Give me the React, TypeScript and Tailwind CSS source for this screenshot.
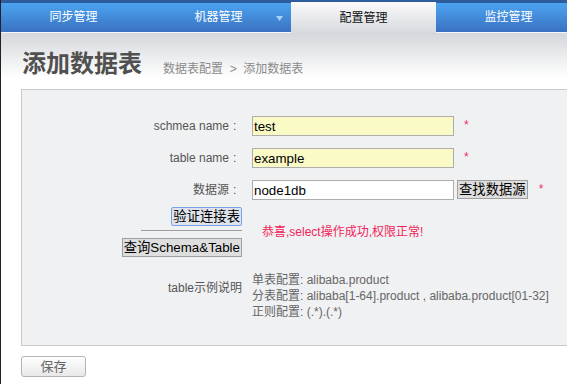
import React from "react";

const font = { fontFamily: '"Liberation Sans", Arial, "Noto Sans CJK SC", sans-serif' };

function Tab({ label, active, arrow }: { label: string; active?: boolean; arrow?: boolean }) {
  if (active) {
    return (
      <div className="relative w-[145px] shrink-0 h-[31px] -mt-[1px] flex items-center justify-center bg-[linear-gradient(#fafafb,#d7d9de)] text-[12px] text-[#111]">
        {label}
      </div>
    );
  }
  return (
    <div className="relative w-[145px] shrink-0 h-[30px] flex items-center justify-center bg-[linear-gradient(#4ba4f1,#3a71c1)] border-b border-[#f4f6f8] text-[12px] text-white">
      <span className="pb-[1px]">{label}</span>
      {arrow && (
        <svg className="absolute left-[130px] top-[13px]" width="7" height="5" viewBox="0 0 7 5">
          <path d="M0 0 L7 0 L3.5 5 Z" fill="#a9d0f5" />
        </svg>
      )}
    </div>
  );
}

function Row({ label, children }: { label: string; children: React.ReactNode }) {
  return (
    <div className="flex items-center h-[32px]">
      <div className="w-[220px] shrink-0 text-right text-[12px] text-[#555]">
        {label}
        <span className="inline-block w-[13px] pl-[4px] text-left">:</span>
      </div>
      <div className="ml-[10px] flex items-center">{children}</div>
    </div>
  );
}

function Star({ ml }: { ml: string }) {
  return <span className={`text-[12px] text-[#f0306a] -mt-[3px] ${ml}`}>*</span>;
}

export default function App() {
  return (
    <div style={font} className="w-[567px] h-[384px] overflow-hidden bg-white border-l border-[#222]">
      {/* nav */}
      <div className="h-[3px] bg-[#2d5c9d]" />
      <div className="flex h-[30px]">
        <Tab label="同步管理" />
        <Tab label="机器管理" arrow />
        <Tab label="配置管理" active />
        <Tab label="监控管理" />
      </div>

      {/* title area */}
      <div className="h-[56px] bg-[linear-gradient(#d4d7db,#ffffff_80%)] pl-[21px] pt-[17px] flex items-start">
        <div className="text-[24px] leading-[28px] font-bold text-[#505050]">添加数据表</div>
        <div className="ml-[21px] mt-[11px] text-[12px] leading-[16px] text-[#8a8a8a]">
          数据表配置&nbsp;&nbsp;&gt;&nbsp;&nbsp;添加数据表
        </div>
      </div>

      {/* panel */}
      <div className="ml-[20px] w-[560px] h-[257px] border border-[#c9c9c9] bg-[#f0f1f3] pt-[20px]">
        <Row label="schmea name">
          <input
            defaultValue="test"
            className="w-[202px] h-[20px] border border-[#adadad] bg-[#fafac6] px-[1px] text-[13.333px] text-black outline-none"
          />
          <Star ml="ml-[10px]" />
        </Row>
        <Row label="table name">
          <input
            defaultValue="example"
            className="w-[202px] h-[20px] border border-[#adadad] bg-[#fafac6] px-[1px] text-[13.333px] text-black outline-none"
          />
          <Star ml="ml-[10px]" />
        </Row>
        <Row label="数据源">
          <input
            defaultValue="node1db"
            className="w-[202px] h-[20px] border border-[#adadad] bg-white px-[1px] text-[13.333px] text-black outline-none"
          />
          <button className="ml-[3px] -mt-[1px] h-[19px] border border-[#a0a0a0] bg-[#dedede] px-[1px] text-[13.333px] leading-[17px] text-black">
            查找数据源
          </button>
          <Star ml="ml-[11px]" />
        </Row>

        <div className="flex">
          <div className="w-[220px] shrink-0 flex flex-col items-end">
            <button className="mt-[1px] h-[19px] rounded-[2px] border border-[#78a2e8] bg-[#dfe3eb] px-[1px] text-[13.333px] leading-[17px] text-black">
              验证连接表
            </button>
            <div className="mt-[4px] w-[101px] h-px bg-[#9c9c9c]" />
            <button className="mt-[7px] h-[19px] border border-[#a0a0a0] bg-[#dedede] px-[1px] text-[13.333px] leading-[17px] text-black">
              查询Schema&amp;Table
            </button>
          </div>
          <div className="ml-[20px] self-center text-[12px] text-[#f2245a]">恭喜,select操作成功,权限正常!</div>
        </div>

        <div className="flex mt-[15px]">
          <div className="w-[220px] shrink-0 text-right text-[12px] leading-[16px] text-[#555] pt-[8px]">table示例说明</div>
          <div className="ml-[10px] text-[12px] leading-[16px] text-[#666]">
            <div>单表配置: alibaba.product</div>
            <div>分表配置: alibaba[1-64].product , alibaba.product[01-32]</div>
            <div>正则配置: (.*).(.*)</div>
          </div>
        </div>
      </div>

      {/* save */}
      <button className="mt-[10px] ml-[20px] w-[65px] h-[21px] rounded-[3px] border border-[#b4b4b4] bg-[linear-gradient(#ffffff,#e8e8e8)] text-[13px] leading-[19px] text-[#666]">
        保存
      </button>
    </div>
  );
}
